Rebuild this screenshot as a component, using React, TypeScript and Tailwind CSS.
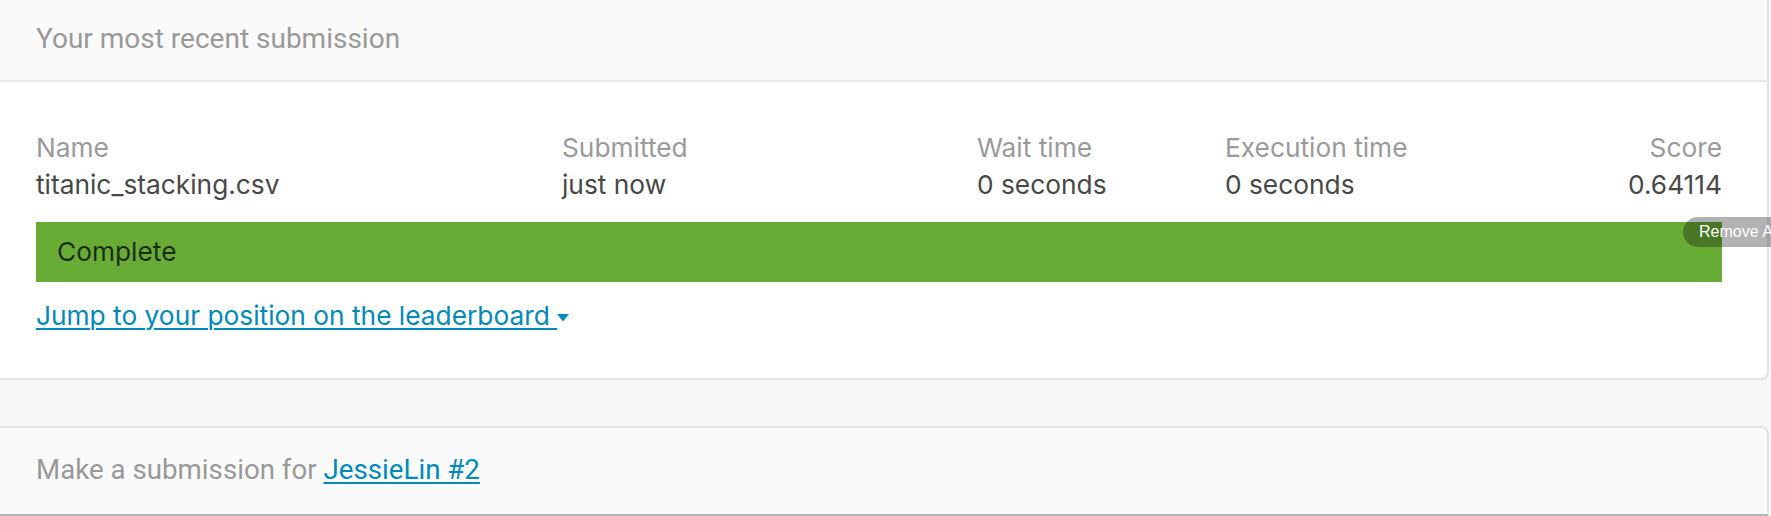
const columns = [
  { label: 'Name', value: 'titanic_stacking.csv' },
  { label: 'Submitted', value: 'just now' },
  { label: 'Wait time', value: '0 seconds' },
  { label: 'Execution time', value: '0 seconds' },
];

export default function App() {
  return (
    <div className="relative w-[1771px] h-[516px] overflow-hidden bg-[#f5f7f8]">
      {/* most recent submission card */}
      <section className="w-[1769px] bg-white border-r-2 border-b-2 border-[#e1e3e5] rounded-br-lg">
        <div className="h-[82px] bg-[#fafafa] border-b-2 border-[#e8e8e8] pl-[36px] pt-[19px]">
          <h2 className="font-['Roboto',sans-serif] text-[28px] leading-[40px] text-[#999999]">
            Your most recent submission
          </h2>
        </div>

        <div className="px-[36px] pt-[48px] pb-[43px] w-[1758px] font-['Inter',sans-serif] text-[26.3px] leading-[36.5px]">
          <div className="grid grid-cols-[526px_415px_248px_1fr_auto]">
            {columns.map((c) => (
              <div key={c.label}>
                <div className="text-[#9a9a9a]">{c.label}</div>
                <div className="text-[#484848]">{c.value}</div>
              </div>
            ))}
            <div className="text-right">
              <div className="text-[#9a9a9a]">Score</div>
              <div className="text-[#484848]">0.64114</div>
            </div>
          </div>

          <div className="mt-[19px] h-[60px] bg-[#68ab35] flex items-center pl-[21px] text-black/75">
            Complete
          </div>

          <div className="mt-[16px]">
            <a href="#" className="text-[#008abc] underline underline-offset-[3px] decoration-[2px]">
              Jump to your position on the leaderboard{' '}
              <svg width="12" height="8" viewBox="0 0 12 8" className="inline-block align-[3px]">
                <path d="M0 0h12L6 7.5z" fill="#008abc" />
              </svg>
            </a>
          </div>
        </div>
      </section>

      {/* make a submission card */}
      <section className="mt-[46px] w-[1769px] h-[90px] bg-[#fafafa] border-t-2 border-r-2 border-b-2 border-t-[#e1e3e5] border-r-[#e1e3e5] border-b-[#b4b4b4] rounded-tr-lg pl-[36px] pt-[22px]">
        <p className="font-['Roboto',sans-serif] text-[27.7px] leading-[40px] text-[#999999]">
          Make a submission for{' '}
          <a href="#" className="text-[#008abc] underline underline-offset-[3px] decoration-[2px]">
            JessieLin #2
          </a>
        </p>
      </section>

      {/* floating extension pill */}
      <div className="absolute left-[1683px] top-[217px] h-[30px] w-[120px] rounded-l-full bg-black/30 flex items-center pl-[16px] font-['Liberation_Sans',Arial,sans-serif] text-[16px] text-white whitespace-nowrap">
        Remove Ads
      </div>
    </div>
  );
}
